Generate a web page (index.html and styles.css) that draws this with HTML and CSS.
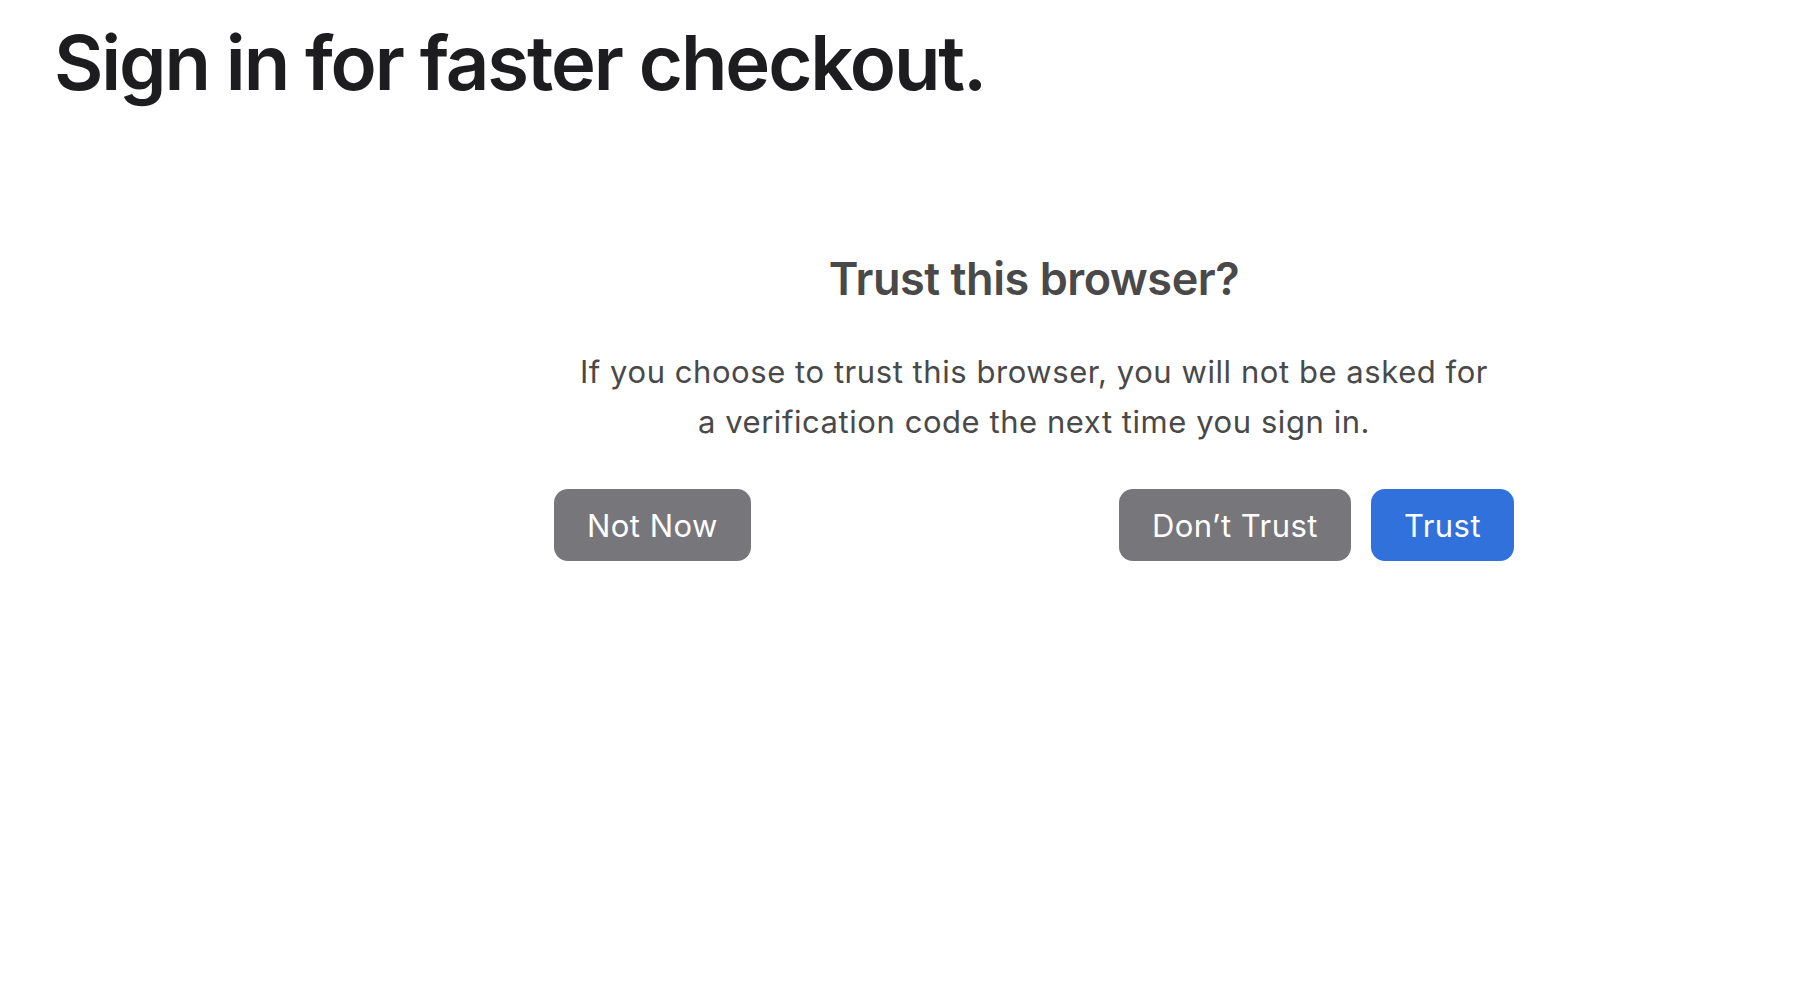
FILE: index.html
```html
<!DOCTYPE html>
<html lang="en">
<head>
<meta charset="utf-8">
<title>Sign in for faster checkout.</title>
<link rel="stylesheet" href="styles.css">
</head>
<body>
<div class="page">
  <h1 class="headline">Sign in for faster checkout.</h1>
  <section class="dialog">
    <h2 class="dialog-title">Trust this browser?</h2>
    <p class="dialog-text">If you choose to trust this browser, you will not be asked for a verification code the next time you sign in.</p>
    <div class="actions">
      <button class="btn btn-gray">Not Now</button>
      <div class="actions-right">
        <button class="btn btn-gray">Don’t Trust</button>
        <button class="btn btn-blue">Trust</button>
      </div>
    </div>
  </section>
</div>
</body>
</html>
```

FILE: styles.css
```css
* { box-sizing: border-box; }
html, body { margin: 0; padding: 0; background: #fff; }
body {
  font-family: Inter, "Noto Sans", "Liberation Sans", sans-serif;
  -webkit-font-smoothing: antialiased;
}
.page {
  padding: 14px 0 0 54px;
}
.headline {
  margin: 0;
  font-size: 76px;
  line-height: 96px;
  font-weight: 600;
  letter-spacing: -0.028em;
  color: #1d1d1f;
}
.dialog {
  width: 960px;
  margin: 143px 0 0 500px;
  display: flex;
  flex-direction: column;
  align-items: center;
}
.dialog-title {
  margin: 0;
  font-size: 45px;
  line-height: 52px;
  font-weight: 600;
  letter-spacing: -0.01em;
  color: #494949;
}
.dialog-text {
  margin: 42px 0 0;
  width: 916px;
  text-align: center;
  font-size: 31px;
  line-height: 50px;
  font-weight: 400;
  letter-spacing: 0.018em;
  color: #494949;
}
.actions {
  margin-top: 42px;
  width: 100%;
  display: flex;
  justify-content: space-between;
}
.actions-right {
  display: flex;
  gap: 20px;
}
.btn {
  height: 72px;
  padding: 0 33px;
  border: none;
  border-radius: 14px;
  font-family: inherit;
  font-size: 31px;
  font-weight: 400;
  letter-spacing: 0.015em;
  color: #fff;
  cursor: pointer;
}
.btn-gray { background: #77767b; }
.btn-blue { background: #3071dc; }
```
